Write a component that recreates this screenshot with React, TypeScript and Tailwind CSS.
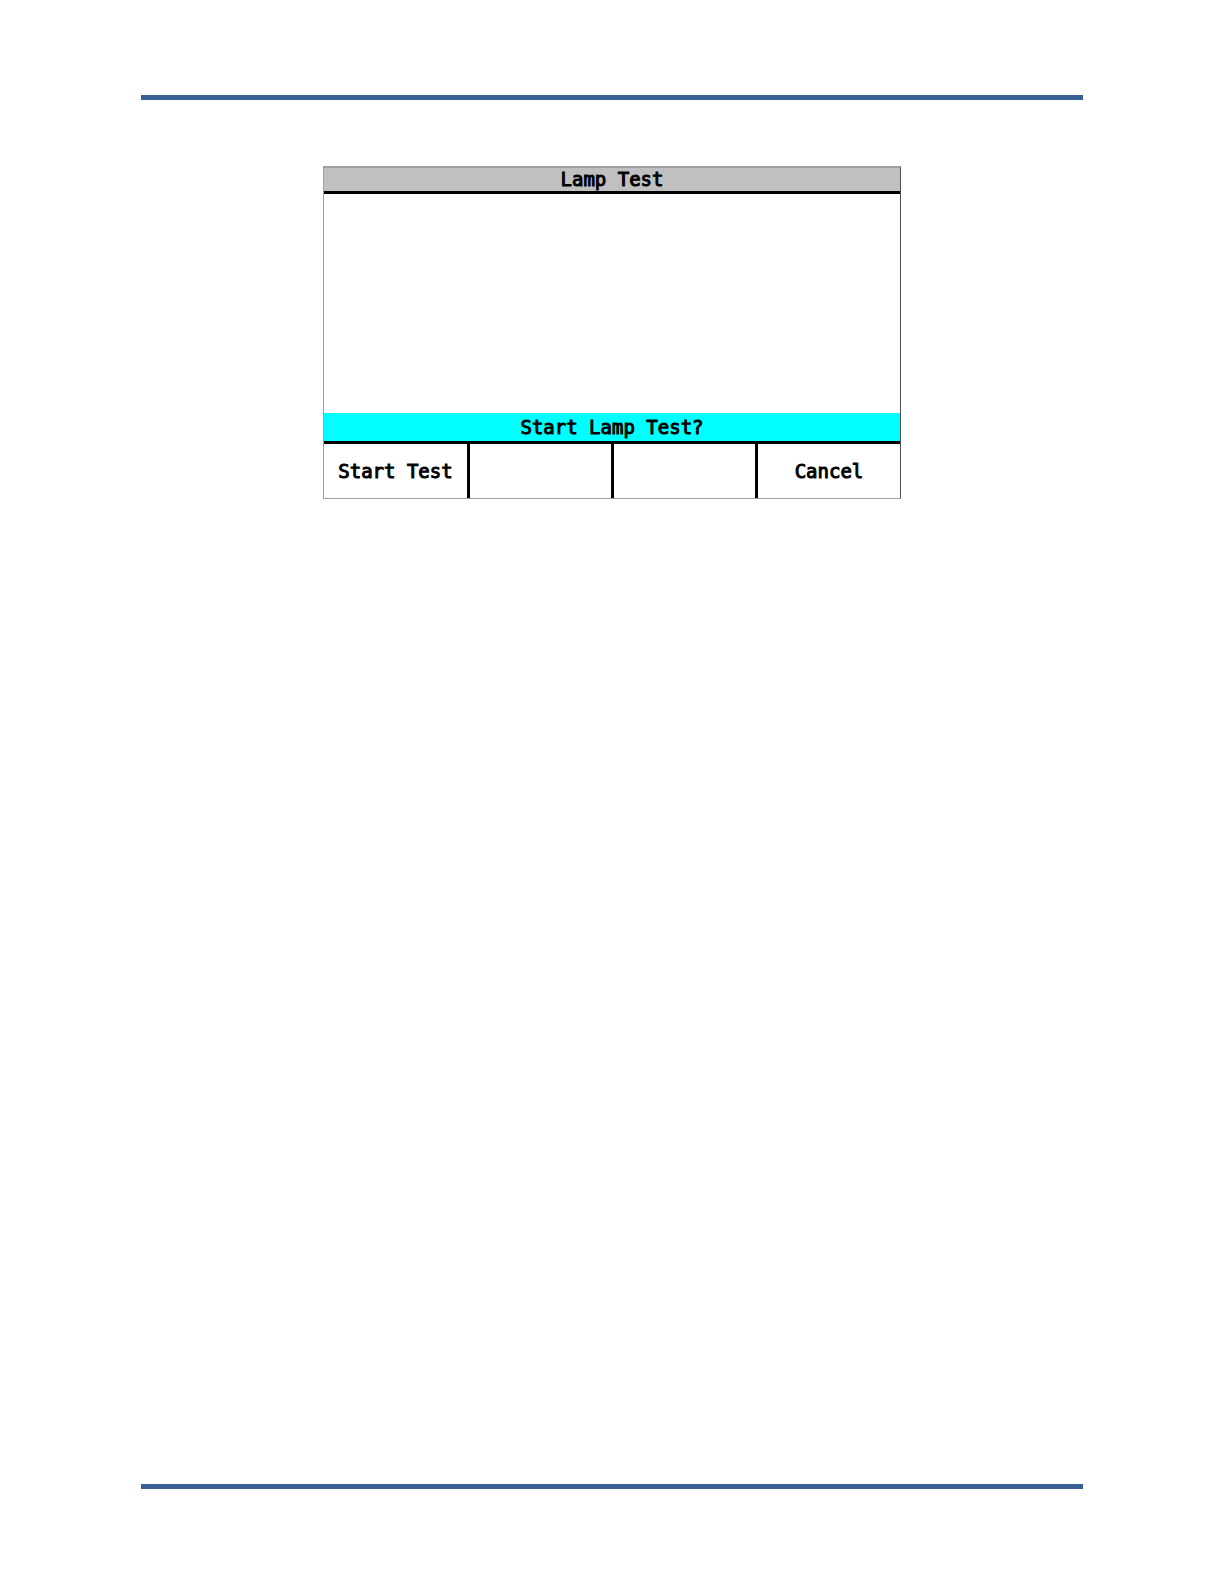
const softKeys = ["Start Test", "", "", "Cancel"];

export default function App() {
  return (
    <div className="flex min-h-screen flex-col bg-white px-[11.5%] pt-[95px] pb-[95px]">
      <div className="h-[5px] shrink-0 bg-[#3a5f92]" />
      <main className="flex grow justify-center pt-[66px]">
        <section
          aria-labelledby="screen-title"
          className="flex w-full max-w-[578px] flex-col self-start border border-t-2 border-[#a0a0a0] border-r-[#505050] font-['DejaVu_Sans_Mono',monospace] text-[19px] leading-6 font-normal text-black [-webkit-text-stroke:1px_black]"
        >
          <h1 id="screen-title" className="h-[26px] border-b-[3px] border-black bg-[#c0c0c0] text-center leading-[22px]">
            Lamp Test
          </h1>
          <div className="h-[219px]" />
          <p className="h-[31px] border-b-[3px] border-black bg-[#00ffff] text-center leading-7">Start Lamp Test?</p>
          <div className="grid h-[54px] grid-cols-[143fr_144fr_144fr_145fr]">
            {softKeys.map((label, i) => (
              <button
                key={i}
                type="button"
                aria-label={label || `Soft key ${i + 1}`}
                className="border-l-[3px] border-black whitespace-nowrap first:border-l-0"
              >
                {label}
              </button>
            ))}
          </div>
        </section>
      </main>
      <div className="h-[5px] shrink-0 bg-[#3a5f92]" />
    </div>
  );
}
